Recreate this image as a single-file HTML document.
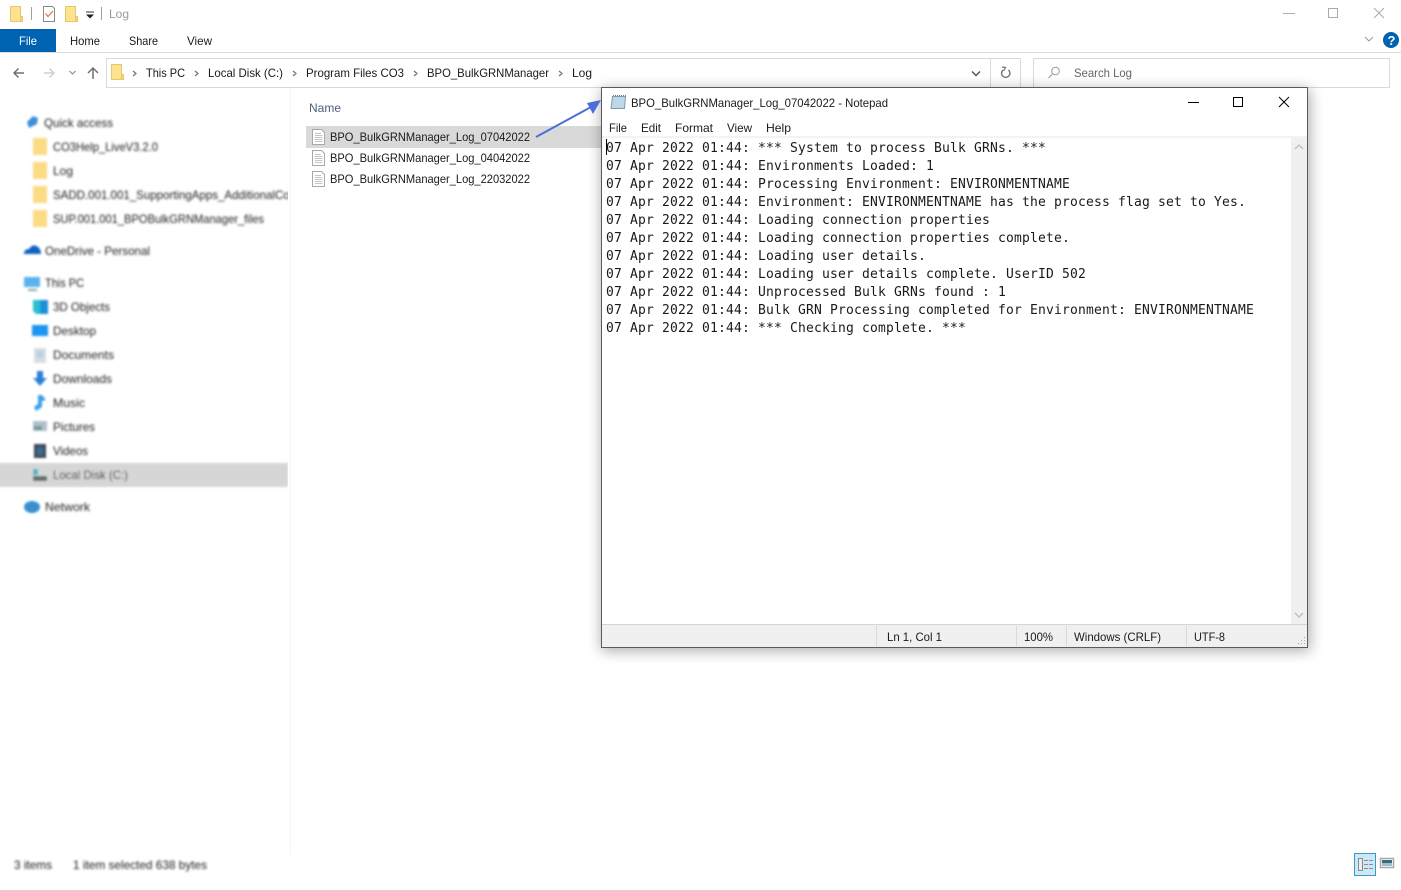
<!DOCTYPE html>
<html><head><meta charset="utf-8"><title>Log</title>
<style>
html,body{margin:0;padding:0;background:#fff;width:1401px;height:890px;overflow:hidden}
svg{display:block}
text{font-family:"Liberation Sans",sans-serif;font-size:12px;fill:#1a1a1a}
.m text{font-family:"DejaVu Sans Mono","Liberation Mono",monospace;font-size:13px;letter-spacing:.174px;fill:#1a1a1a;white-space:pre}
.b text{fill:#222}
</style></head><body>
<svg width="1401" height="890" viewBox="0 0 1401 890" xmlns="http://www.w3.org/2000/svg">
<defs>
<filter id="blur" x="-5%" y="-5%" width="110%" height="110%"><feGaussianBlur stdDeviation="1.15"/></filter>
<filter id="sh" x="-10%" y="-10%" width="120%" height="120%"><feGaussianBlur stdDeviation="7"/></filter>
<clipPath id="navclip"><rect x="0" y="100" width="288" height="440"/></clipPath>
<g id="folder"><path d="M.5 .5H10.500V10.500H12.500V15.500H.5Z" fill="#fde28f" stroke="#e6c76f"/><path d="M10.500 10.500H12.500V15.500H10.500Z" fill="#f8d775" stroke="#e6c76f"/></g>
<g id="doc"><path d="M.5 .5H9.500L12.500 3.500V15.500H.5Z" fill="#fff" stroke="#a8a8a8"/><path d="M3 4.500H9M3 6.500H10.500M3 8.500H10.500M3 10.500H10.500M3 12.500H10.500" stroke="#c4c4c4" fill="none"/></g>
</defs>

<!-- quick access bar -->
<use href="#folder" x="10" y="6"/>
<rect x="31" y="7" width="1" height="13" fill="#a0a0a0"/>
<path d="M43.500 6.500H52.500L54.500 8.500V21.500H43.500Z" fill="#fff" stroke="#8a8a8a"/>
<path d="M45.500 13.500L48 16.500L53 11" fill="none" stroke="#de7a55" stroke-width="1.300"/>
<use href="#folder" x="65" y="6"/>
<path d="M86 12H94" stroke="#333"/><path d="M86 14.500H94L90 18.500Z" fill="#222"/>
<rect x="101" y="7" width="1" height="13" fill="#a0a0a0"/>
<text x="109" y="18" textLength="20" lengthAdjust="spacingAndGlyphs" style="fill:#999">Log</text>

<!-- window controls -->
<path d="M1283 13.500H1295" stroke="#aaa"/>
<rect x="1328.500" y="8.500" width="9" height="9" fill="none" stroke="#aaa"/>
<path d="M1374 8L1384 18M1384 8L1374 18" stroke="#aaa" fill="none"/>

<!-- ribbon tabs -->
<rect x="0" y="29" width="56" height="23" fill="#0063b1"/>
<text x="19" y="45" textLength="18" lengthAdjust="spacingAndGlyphs" style="fill:#fff">File</text>
<text x="70" y="45" textLength="30" lengthAdjust="spacingAndGlyphs">Home</text>
<text x="129" y="45" textLength="29" lengthAdjust="spacingAndGlyphs">Share</text>
<text x="187" y="45" textLength="25" lengthAdjust="spacingAndGlyphs">View</text>
<rect x="0" y="52" width="1401" height="1" fill="#dadbdc"/>
<path d="M1365 37L1369 41L1373 37" fill="none" stroke="#999"/>
<circle cx="1391" cy="40" r="8" fill="#0063b1"/>
<text x="1387.500" y="45" style="fill:#fff;font-weight:bold;font-size:13px">?</text>

<!-- nav buttons -->
<path d="M24 73H14M18.500 68.500L14 73L18.500 77.500" fill="none" stroke="#707070" stroke-width="1.500"/>
<path d="M44 73H54M49.500 68.500L54 73L49.500 77.500" fill="none" stroke="#d0d0d0" stroke-width="1.500"/>
<path d="M69.500 71L72.500 74L75.500 71" fill="none" stroke="#909090" stroke-width="1.200"/>
<path d="M93 79V68M88 73L93 68L98 73" fill="none" stroke="#707070" stroke-width="1.500"/>

<!-- address bar -->
<rect x="106.500" y="58.500" width="914" height="29" fill="#fff" stroke="#d9d9d9"/>
<rect x="990" y="59" width="1" height="28" fill="#d9d9d9"/>
<use href="#folder" x="111" y="64"/>
<g fill="none" stroke="#707070" stroke-width="1.200">
<path d="M133 71L136 73.500L133 76M195 71L198 73.500L195 76M293 71L296 73.500L293 76M414 71L417 73.500L414 76M559 71L562 73.500L559 76"/>
<path d="M972 71.500L976 75.500L980 71.500" stroke="#555" stroke-width="1.500"/>
</g>
<text x="146" y="77" textLength="39" lengthAdjust="spacingAndGlyphs">This PC</text>
<text x="208" y="77" textLength="75" lengthAdjust="spacingAndGlyphs">Local Disk (C:)</text>
<text x="306" y="77" textLength="98" lengthAdjust="spacingAndGlyphs">Program Files CO3</text>
<text x="427" y="77" textLength="122" lengthAdjust="spacingAndGlyphs">BPO_BulkGRNManager</text>
<text x="572" y="77" textLength="20" lengthAdjust="spacingAndGlyphs">Log</text>
<path d="M1008.500 70A4.200 4.200 0 1 1 1003 70" fill="none" stroke="#707070" stroke-width="1.400"/>
<path d="M1002 67L1005.500 67.500L1003.500 71" fill="none" stroke="#707070" stroke-width="1.200"/>

<!-- search -->
<rect x="1033.500" y="58.500" width="356" height="29" fill="#fff" stroke="#d9d9d9"/>
<circle cx="1055.500" cy="71" r="3.800" fill="none" stroke="#999"/>
<path d="M1052.500 74L1048.500 78" stroke="#999"/>
<text x="1074" y="77" textLength="58" lengthAdjust="spacingAndGlyphs" style="fill:#666">Search Log</text>

<!-- navigation pane blurred -->
<g clip-path="url(#navclip)"><g filter="url(#blur)">
<rect x="-10" y="463" width="298" height="24" fill="#d6d6d6"/>
<path d="M27 122L33 116L38 118L37 124L29 128Z" fill="#3d8fd8"/>
<rect x="33" y="138" width="14" height="17" fill="#fbdb84"/>
<rect x="33" y="162" width="14" height="17" fill="#fbdb84"/>
<rect x="33" y="186" width="14" height="17" fill="#fbdb84"/>
<rect x="33" y="210" width="14" height="17" fill="#fbdb84"/>
<path d="M24 254Q24 249 29 249Q33 243 38 247Q41 249 41 254Z" fill="#0a64c0"/>
<rect x="24" y="277" width="16" height="10" fill="#58b3ee"/>
<rect x="28" y="289" width="9" height="2" fill="#8aa"/>
<path d="M33 300H40V314H36L33 311Z" fill="#2bc0cc"/><path d="M40 300H48V314H40Z" fill="#1e8fd8"/>
<rect x="32" y="325" width="16" height="11" fill="#1e96f0"/>
<rect x="34" y="348" width="12" height="15" fill="#d8dde2"/><rect x="37" y="351" width="6" height="7" fill="#b8d0e4"/>
<path d="M37 371H43V378H47L40 386L33 378H37Z" fill="#2b7fd8"/>
<path d="M38 395H42L46 400L42 401V407L36 411L34 407L38 404Z" fill="#3aa0ee"/>
<rect x="33" y="421" width="14" height="10" fill="#b4c0c8"/><rect x="34" y="426" width="8" height="4" fill="#6f9a9c"/>
<rect x="34" y="444" width="12" height="14" fill="#3f4a56"/><rect x="37" y="447" width="6" height="8" fill="#3a6a90"/>
<rect x="33" y="476" width="14" height="5" fill="#5c7070"/>
<rect x="33" y="469" width="5" height="6" fill="#4cb8c8"/>
<ellipse cx="32" cy="507" rx="8" ry="6" fill="#3b8fd0"/>
<g class="b">
<text x="44" y="127" textLength="69" lengthAdjust="spacingAndGlyphs">Quick access</text>
<text x="53" y="151" textLength="105" lengthAdjust="spacingAndGlyphs">CO3Help_LiveV3.2.0</text>
<text x="53" y="175" textLength="20" lengthAdjust="spacingAndGlyphs">Log</text>
<text x="53" y="199" textLength="245" lengthAdjust="spacingAndGlyphs">SADD.001.001_SupportingApps_AdditionalCols</text>
<text x="53" y="223" textLength="211" lengthAdjust="spacingAndGlyphs">SUP.001.001_BPOBulkGRNManager_files</text>
<text x="45" y="255" textLength="105" lengthAdjust="spacingAndGlyphs">OneDrive - Personal</text>
<text x="45" y="287" textLength="39" lengthAdjust="spacingAndGlyphs">This PC</text>
<text x="53" y="311" textLength="57" lengthAdjust="spacingAndGlyphs">3D Objects</text>
<text x="53" y="335" textLength="43" lengthAdjust="spacingAndGlyphs">Desktop</text>
<text x="53" y="359" textLength="61" lengthAdjust="spacingAndGlyphs">Documents</text>
<text x="53" y="383" textLength="59" lengthAdjust="spacingAndGlyphs">Downloads</text>
<text x="53" y="407" textLength="32" lengthAdjust="spacingAndGlyphs">Music</text>
<text x="53" y="431" textLength="42" lengthAdjust="spacingAndGlyphs">Pictures</text>
<text x="53" y="455" textLength="35" lengthAdjust="spacingAndGlyphs">Videos</text>
<text x="53" y="479" textLength="75" lengthAdjust="spacingAndGlyphs">Local Disk (C:)</text>
<text x="45" y="511" textLength="45" lengthAdjust="spacingAndGlyphs">Network</text>
</g></g></g>
<rect x="290" y="88" width="1" height="766" fill="#f4f4f4"/>

<!-- file list -->
<text x="309" y="112" textLength="32" lengthAdjust="spacingAndGlyphs" style="fill:#4c607a">Name</text>
<rect x="306" y="126" width="296" height="22" fill="#d9d9d9"/>
<use href="#doc" x="312" y="129"/>
<use href="#doc" x="312" y="150"/>
<use href="#doc" x="312" y="171"/>
<text x="330" y="141" textLength="200" lengthAdjust="spacingAndGlyphs">BPO_BulkGRNManager_Log_07042022</text>
<text x="330" y="162" textLength="200" lengthAdjust="spacingAndGlyphs">BPO_BulkGRNManager_Log_04042022</text>
<text x="330" y="183" textLength="200" lengthAdjust="spacingAndGlyphs">BPO_BulkGRNManager_Log_22032022</text>

<!-- notepad -->
<rect x="601" y="89" width="709" height="562" fill="#000" opacity=".32" filter="url(#sh)"/>
<rect x="601.500" y="87.500" width="706" height="560" fill="#fff" stroke="#5a5a5a"/>
<path d="M612.500 96.500H625.500L624.500 108.500H611Z" fill="#bcd9ea" stroke="#7f9aa8"/>
<path d="M613 95.500H626" stroke="#6a7a84" stroke-dasharray="1 1"/>
<text x="631" y="107" textLength="257" lengthAdjust="spacingAndGlyphs">BPO_BulkGRNManager_Log_07042022 - Notepad</text>
<path d="M1188 102.500H1199" stroke="#000"/>
<rect x="1233.500" y="97.500" width="9" height="9" fill="none" stroke="#000"/>
<path d="M1279 97L1289 107M1289 97L1279 107" stroke="#000" fill="none"/>
<text x="609" y="132" textLength="18" lengthAdjust="spacingAndGlyphs">File</text>
<text x="641" y="132" textLength="20" lengthAdjust="spacingAndGlyphs">Edit</text>
<text x="675" y="132" textLength="38" lengthAdjust="spacingAndGlyphs">Format</text>
<text x="727" y="132" textLength="25" lengthAdjust="spacingAndGlyphs">View</text>
<text x="766" y="132" textLength="25" lengthAdjust="spacingAndGlyphs">Help</text>
<rect x="602" y="136" width="705" height="2" fill="#f3f3f3"/>
<rect x="1291" y="138" width="16" height="487" fill="#f0f0f0"/>
<path d="M1295 149L1299 145L1303 149M1295 613L1299 617L1303 613" fill="none" stroke="#bdbdbd" stroke-width="1.300"/>
<rect x="606" y="139" width="1" height="16" fill="#000"/>
<g class="m">
<text x="606" y="152" xml:space="preserve">07 Apr 2022 01:44: *** System to process Bulk GRNs. ***</text>
<text x="606" y="170" xml:space="preserve">07 Apr 2022 01:44: Environments Loaded: 1</text>
<text x="606" y="188" xml:space="preserve">07 Apr 2022 01:44: Processing Environment: ENVIRONMENTNAME</text>
<text x="606" y="206" xml:space="preserve">07 Apr 2022 01:44: Environment: ENVIRONMENTNAME has the process flag set to Yes.</text>
<text x="606" y="224" xml:space="preserve">07 Apr 2022 01:44: Loading connection properties</text>
<text x="606" y="242" xml:space="preserve">07 Apr 2022 01:44: Loading connection properties complete.</text>
<text x="606" y="260" xml:space="preserve">07 Apr 2022 01:44: Loading user details.</text>
<text x="606" y="278" xml:space="preserve">07 Apr 2022 01:44: Loading user details complete. UserID 502</text>
<text x="606" y="296" xml:space="preserve">07 Apr 2022 01:44: Unprocessed Bulk GRNs found : 1</text>
<text x="606" y="314" xml:space="preserve">07 Apr 2022 01:44: Bulk GRN Processing completed for Environment: ENVIRONMENTNAME</text>
<text x="606" y="332" xml:space="preserve">07 Apr 2022 01:44: *** Checking complete. ***</text>
</g>

<!-- arrow -->
<path d="M536 137L591 107" stroke="#4a6fd8" stroke-width="2" fill="none"/>
<path d="M601 100L587 103L593 114Z" fill="#4a6fd8"/>

<!-- notepad status -->
<rect x="602" y="624" width="705" height="23" fill="#f0f0f0"/>
<rect x="602" y="624" width="705" height="1" fill="#d4d4d4"/>
<g fill="#d9d9d9">
<rect x="876" y="626" width="1" height="20"/><rect x="1016" y="626" width="1" height="20"/>
<rect x="1066" y="626" width="1" height="20"/><rect x="1186" y="626" width="1" height="20"/>
</g>
<text x="887" y="641" textLength="55" lengthAdjust="spacingAndGlyphs">Ln 1, Col 1</text>
<text x="1024" y="641" textLength="29" lengthAdjust="spacingAndGlyphs">100%</text>
<text x="1074" y="641" textLength="87" lengthAdjust="spacingAndGlyphs">Windows (CRLF)</text>
<text x="1194" y="641" textLength="31" lengthAdjust="spacingAndGlyphs">UTF-8</text>
<path d="M1304 637h1v1h-1zM1301 640h1v1h-1zM1304 640h1v1h-1zM1298 643h1v1h-1zM1301 643h1v1h-1zM1304 643h1v1h-1z" fill="#a8a8a8"/>

<!-- explorer status -->
<g filter="url(#blur)"><g class="b">
<text x="14" y="869" textLength="38" lengthAdjust="spacingAndGlyphs">3 items</text>
<text x="73" y="869" textLength="134" lengthAdjust="spacingAndGlyphs">1 item selected  638 bytes</text>
</g></g>
<rect x="1354.500" y="853.500" width="21" height="22" fill="#cce8f6" stroke="#3a9dc0"/>
<rect x="1358.500" y="858.500" width="4" height="12" fill="#eee" stroke="#8c8c8c"/>
<path d="M1364 860.500H1374M1364 864.500H1374M1364 868.500H1374" stroke="#8c8c8c" stroke-dasharray="4 1"/>
<rect x="1380.500" y="858.500" width="13" height="9" fill="#fff" stroke="#a8a8a8" stroke-width="1.500"/>
<rect x="1382" y="860" width="10" height="3" fill="#3d6a82"/>
<rect x="1382" y="863" width="10" height="3" fill="#9cc0cc"/>
</svg>
</body></html>
